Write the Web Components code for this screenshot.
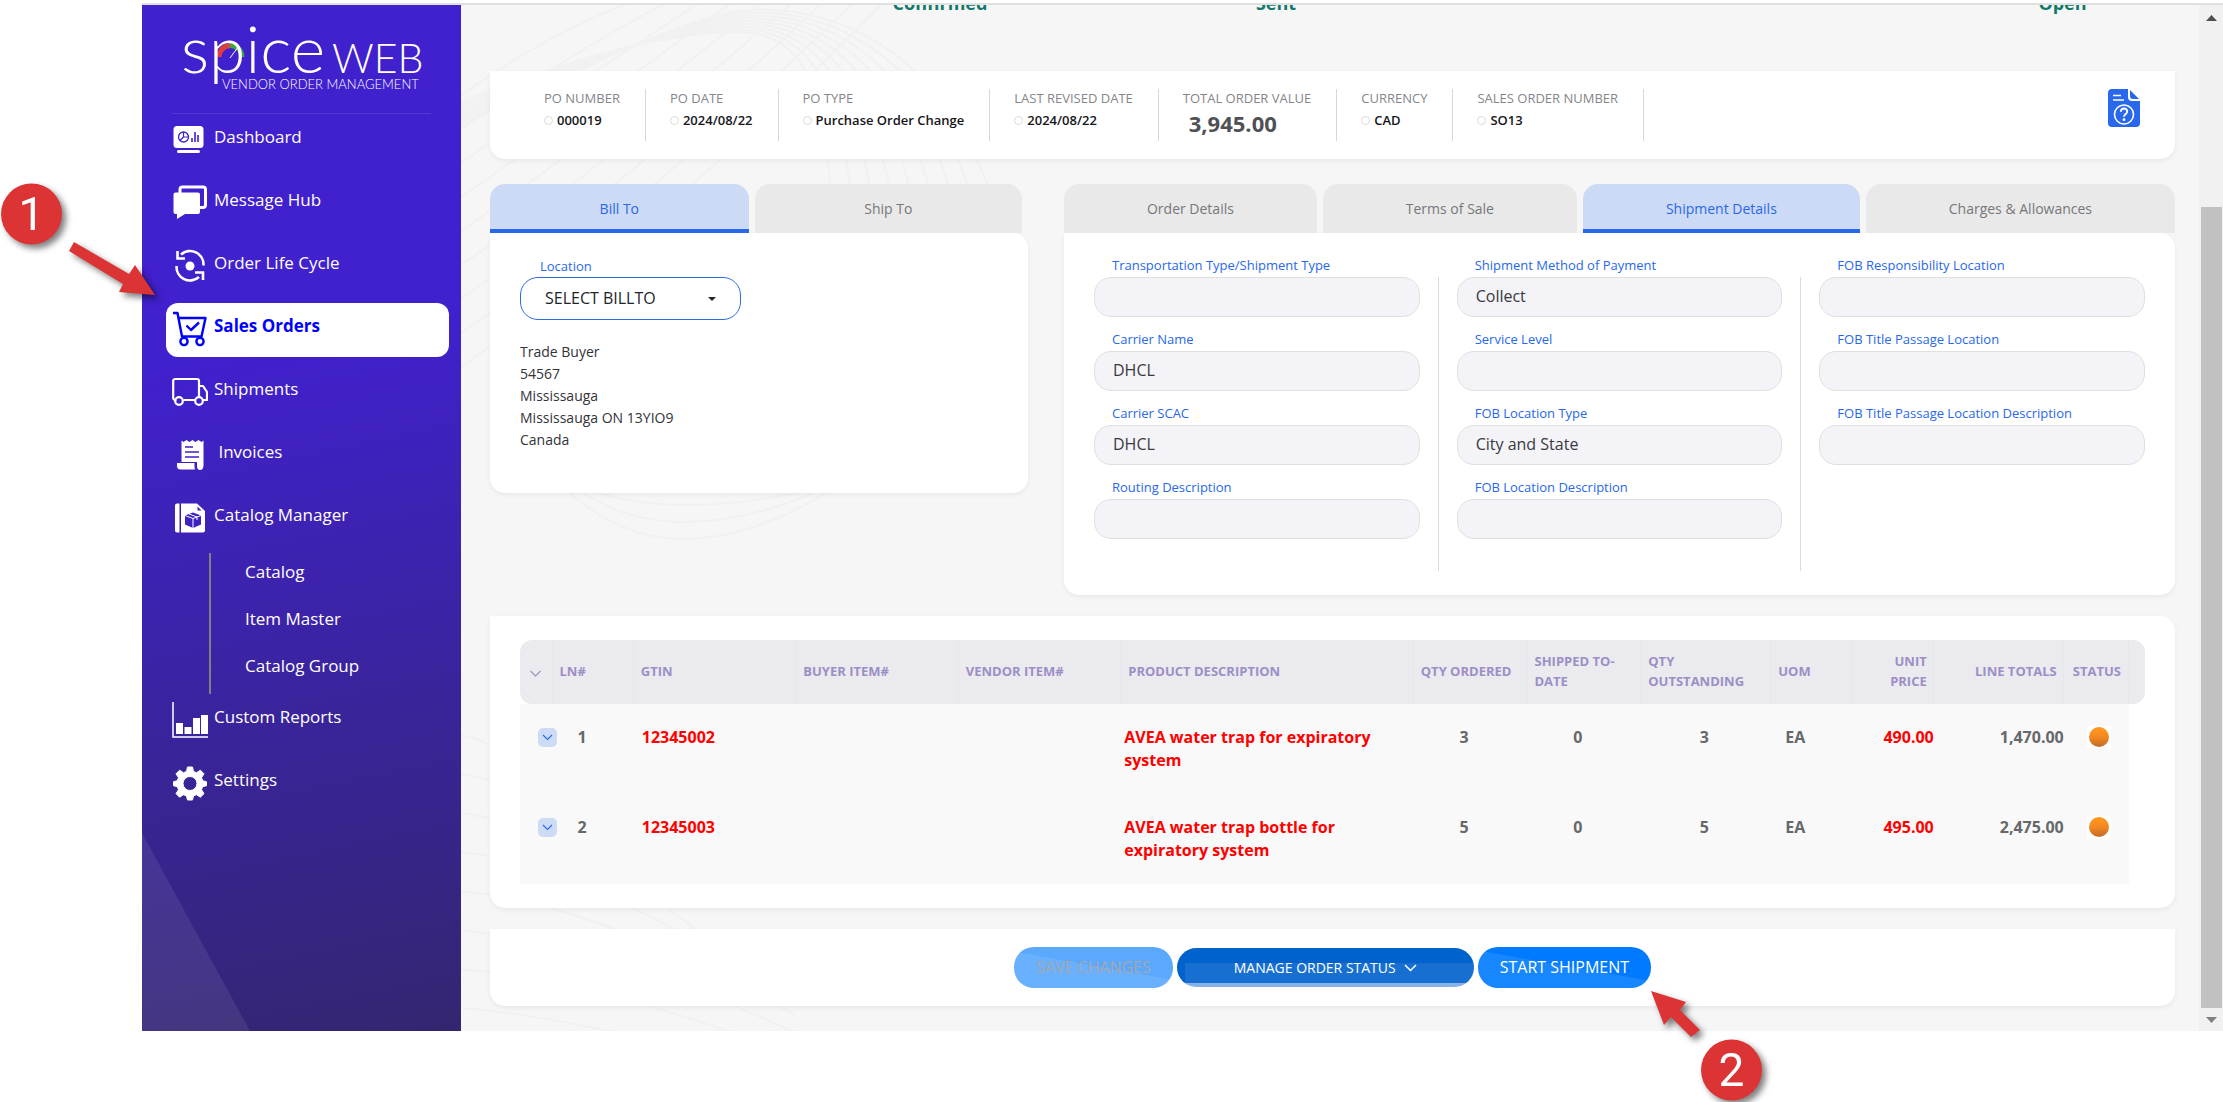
<!DOCTYPE html>
<html lang="en">
<head>
<meta charset="utf-8">
<meta name="viewport" content="width=device-width, initial-scale=1">
<title>Spice Web - Sales Order</title>
<style>
  html, body { margin: 0; background: #fff; }
  body { position: relative; min-height: 100vh; font-family: "Open Sans", "Noto Sans", sans-serif; color: #212529; overflow: hidden; }
  .app { margin-left: 142px; padding-top: 3px; }
  .rule { height: 2px; background: #e0e0e0; }
  .shell { display: grid; grid-template-columns: 319px minmax(0, 1fr) 24px; }
</style>
</head>
<body>
<div class="app">
  <div class="rule"></div>
  <div class="shell">
    <side-nav></side-nav>
    <order-page></order-page>
    <page-scrollbar></page-scrollbar>
  </div>
</div>
<step-callout number="1" style="left:0;top:180px"></step-callout>
<step-callout number="2" style="left:1640px;top:980px"></step-callout>

<script>
const define = (name, html, setup) => {
  const tpl = document.createElement('template');
  tpl.innerHTML = '<style>*{box-sizing:border-box}:host{display:block}[hidden]{display:none}</style>' + html;
  customElements.define(name, class extends HTMLElement {
    connectedCallback() {
      if (this.shadowRoot) return;
      const root = this.attachShadow({ mode: 'open' });
      root.appendChild(tpl.content.cloneNode(true));
      if (setup) setup.call(this, root);
    }
  });
};

const ICONS = {
  dashboard: '<rect x="1.500" y="4" width="30" height="22" rx="3.500" fill="#fff"/><rect x="5" y="28" width="23" height="3" rx="1.500" fill="#fff"/><circle cx="11.500" cy="15" r="5" fill="none" stroke="#4120cd" stroke-width="1.300"/><path d="M11.500 10v5h5M11.500 15l-3.500 3.500" fill="none" stroke="#4120cd" stroke-width="1.200"/><path d="M20 20v-4M23 20v-10M26 20v-7" stroke="#4120cd" stroke-width="1.600"/>',
  message: '<path d="M8 8V4.500A2.500 2.500 0 0 1 10.500 2H31a2.500 2.500 0 0 1 2.500 2.500V20a2.500 2.500 0 0 1-2.500 2.500h-3" fill="none" stroke="#fff" stroke-width="3"/><path d="M3.500 7.500H26a2 2 0 0 1 2 2V27a2 2 0 0 1-2 2H13l-8 5v-5H3.500a2 2 0 0 1-2-2V9.500a2 2 0 0 1 2-2z" fill="#fff"/>',
  cycle: '<g fill="none" stroke="#fff" stroke-width="2.600"><path d="M9 6.500A13.500 13.500 0 0 1 31.500 17.500"/><path d="M27 29A13.500 13.500 0 0 1 4.500 18"/><path d="M5.500 3v7.500H13M31 32v-7.500H23"/></g><circle cx="18" cy="18" r="4.500" fill="#fff"/>',
  cart: '<g fill="none" stroke="#00f" stroke-width="2.400" stroke-linejoin="round"><path d="M1 2h4.500L10 25.500h19.500L33.500 7H7"/><path d="M14.500 14.500l4.500 4.500 8-7.500"/><circle cx="12" cy="30.500" r="3.600"/><circle cx="28" cy="30.500" r="3.600"/></g>',
  truck: '<g fill="none" stroke="#fff" stroke-width="2.200" stroke-linejoin="round"><path d="M3 26H3.500A2 2 0 0 1 1.200 24V7A2 2 0 0 1 3.200 5H25a2 2 0 0 1 2 2V23M11.500 26H23M27 12h4l4 6v8h-4M27 12v11"/><circle cx="7" cy="27" r="3.800"/><circle cx="27" cy="27" r="3.800"/></g>',
  invoice: '<path d="M9.500 3.500l2 1.500 3-2 3 2 3-2 3 2 3-2 3 2 2-1.500V28q0 5-3.500 5-3 0-3-4v-4H9.500z" fill="#fff"/><path d="M4.500 25.500H23V30q0 2 1 3H8q-3.500 0-3.500-4z" fill="#fff" stroke="#3f21c0" stroke-width="1"/><path d="M13 10h8M13 15h14M13 20h14" stroke="#3f21c0" stroke-width="1.600"/>',
  catalog: '<path d="M5 3.500h2.500v29H5a2 2 0 0 1-2-2v-25a2 2 0 0 1 2-2z" fill="#fff"/><path d="M9 3.500h16L33 11v19.500a2 2 0 0 1-2 2H9z" fill="#fff"/><path d="M25.500 6.500v4h4z" fill="#3f21c0"/><path d="M21 12.500l8 3v9L21 28l-8-3.500v-9z" fill="#3f21c0"/><path d="M13 15.500l8 3 8-3M21 18.500V28M17 14l8 3v3" fill="none" stroke="#fff" stroke-width="1"/>',
  chart: '<path d="M1 0V35H36" fill="none" stroke="#fff" stroke-width="1.500"/><path d="M4 21h7v11H4zM12.500 25h7v7h-7zM21 16h7v16h-7zM29 13h7v19h-7z" fill="#fff"/>',
  gear: '<path fill="#fff" stroke="#fff" stroke-width="1" stroke-linejoin="round" fill-rule="evenodd" d="M15.500 2h5l1 4.500 3 1.200 3.900-2.500 3.600 3.600-2.500 3.900 1.200 3 3.800 1v4l-3.800 1-1.200 3 2.500 3.900-3.600 3.600-3.900-2.500-3 1.200-1 4.100h-5l-1-4.100-3-1.200-3.900 2.500-3.600-3.600 2.500-3.900-1.200-3-3.800-1v-4l3.800-1 1.200-3-2.500-3.900 3.600-3.600 3.900 2.500 3-1.200zM18 11.500a7 7 0 1 0 0 14 7 7 0 0 0 0-14z"/>'
};

/* One entry of the side menu. */
define('nav-item', `
<style>
  a { display: flex; align-items: center; gap: 6px; height: 54px; padding-left: 6px; border-radius: 12px; color: #fff; font-size: 17px; line-height: 24px; text-decoration: none; }
  svg { flex: none; width: 36px; height: 36px; margin-bottom: 2px; }
  span { padding-bottom: 8px; white-space: pre; }
  :host([active]) a { background: #fff; color: #00f; font-weight: 700; }
</style>
<a href="#"><svg viewBox="0 0 36 36" aria-hidden="true"></svg><span><slot></slot></span></a>`,
function (root) { root.querySelector('svg').innerHTML = ICONS[this.getAttribute('icon')]; });

define('brand-logo', `
<style>svg { display: block; width: 100%; height: 64px; overflow: visible; }</style>
<svg viewBox="0 0 240 64" preserveAspectRatio="xMinYMid" role="img" aria-label="Spice Web" fill="#fff">
  <defs><linearGradient id="g"><stop offset=".35" stop-color="#e23b3b"/><stop offset=".6" stop-color="#36a94c"/></linearGradient></defs>
  <path d="M35 32A11.500 11.500 0 0 1 58 32" fill="none" stroke="url(#g)" stroke-width="5"/>
  <path d="M46 33l8-11" stroke="#fff" stroke-width="1"/>
  <text x="-3" y="48" font-family="Lato" font-weight="300" font-size="66">spice</text>
  <text x="148" y="48" font-family="Lato" font-weight="300" font-size="41">WEB</text>
  <text x="38" y="64" font-family="Lato" font-weight="300" font-size="13">VENDOR ORDER MANAGEMENT</text>
</svg>`);

define('side-nav', `
<style>
  :host { position: relative; background: linear-gradient(168deg, #4120cd 34%, #3a249b 68%, #352570 100%); }
  nav { padding: 20px 12px 0 24px; }
  brand-logo { margin: 0 16px 0 18px; }
  hr { margin: 24px 18px 0 6px; border: 0; height: 1px; background: rgba(255,255,255,.1); }
  .list { display: grid; gap: 9px; }
  ul { list-style: none; margin: -2px 0 -9px 43px; padding: 0; border-left: 2px solid #808080; }
  li a { display: flex; align-items: center; height: 47px; padding: 0 0 10px 34px; color: #fff; font-size: 17px; line-height: 24px; text-decoration: none; }
  .wedge { position: absolute; left: 0; bottom: 0; width: 108px; height: 198px; background: rgba(255,255,255,.08); clip-path: polygon(0 0, 100% 100%, 0 100%); }
</style>
<div class="wedge"></div>
<nav>
  <brand-logo></brand-logo>
  <hr>
  <div class="list">
    <nav-item icon="dashboard">Dashboard</nav-item>
    <nav-item icon="message">Message Hub</nav-item>
    <nav-item icon="cycle">Order Life Cycle</nav-item>
    <nav-item icon="cart" active>Sales Orders</nav-item>
    <nav-item icon="truck">Shipments</nav-item>
    <nav-item icon="invoice">&nbsp;Invoices</nav-item>
    <nav-item icon="catalog">Catalog Manager</nav-item>
    <ul>
      <li><a href="#">Catalog</a></li>
      <li><a href="#">Item Master</a></li>
      <li><a href="#">Catalog Group</a></li>
    </ul>
    <nav-item icon="chart">Custom Reports</nav-item>
    <nav-item icon="gear">Settings</nav-item>
  </div>
</nav>`);

define('page-scrollbar', `
<style>
  :host { display: grid; grid-template-rows: 26px 176fr 801fr 23px; justify-items: stretch; background: #f1f1f1; }
  svg { place-self: center; width: 11px; height: 6px; }
  .thumb { margin: 0 1px 0 2px; background: #c1c1c1; }
</style>
<svg viewBox="0 0 11 6"><path d="M0 6L5.500 0 11 6z" fill="#505050"/></svg>
<div></div><div class="thumb"></div>
<svg viewBox="0 0 11 6"><path d="M0 0L5.500 6 11 0z" fill="#808080"/></svg>`);

define('surface-card', `
<style>:host { background: #fff; border-radius: 0 0 15px 15px; box-shadow: 0 2px 5px rgba(0,0,0,.06); }</style>
<slot></slot>`);

/* Label over value, with a rule on the right. */
define('summary-item', `
<style>
  :host { min-height: 52px; padding: 0 25px 0 24px; border-right: 1px solid #d8d8dc; white-space: nowrap; }
  .label { padding-bottom: 2px; font-size: 13px; line-height: 18px; color: #85858a; }
  .value { display: flex; align-items: center; gap: 4px; font-size: 13px; line-height: 22px; font-weight: 600; color: #16161a; }
  .value::before { content: ""; width: 7px; height: 7px; border: 1px solid #dadada; border-radius: 50%; }
  :host([total]) .value { padding-left: 6px; font-size: 22px; line-height: 28px; font-weight: 700; color: #505055; }
  :host([total]) .value::before { display: none; }
</style>
<div class="label"></div><div class="value"><slot></slot></div>`,
function (root) { root.querySelector('.label').textContent = this.getAttribute('label'); });

define('tab-bar', `
<style>
  :host { display: flex; gap: 6px; }
  button { flex: 1 1 auto; height: 49px; padding: 0; border: 0; border-radius: 15px 15px 0 0; background: #e9e9e9; color: #77777b; font: 400 14px/20px "Open Sans", sans-serif; }
  button[aria-selected=true] { border-bottom: 4px solid #2868ec; padding-top: 4px; background: #cddaf5; color: #2868ec; }
</style>`,
function (root) {
  this.setAttribute('role', 'tablist');
  this.getAttribute('tabs').split('|').forEach((t, i) => {
    const b = document.createElement('button');
    b.type = 'button'; b.textContent = t; b.setAttribute('role', 'tab');
    b.setAttribute('aria-selected', i === +this.getAttribute('selected'));
    root.append(b);
  });
});

define('text-field', `
<style>
  label { display: block; padding: 0 0 2px 18px; font-size: 13px; line-height: 20px; color: #2868ec; }
  input { display: block; width: 100%; height: 40px; padding: 0 18px 2px; border: 1px solid #e0e0e0; border-radius: 17px; background: #f3f3f8; color: #3a3a3e; font: 400 16px/22px "Open Sans", sans-serif; }
</style>
<label for="f"></label><input id="f" type="text" readonly>`,
function (root) {
  root.querySelector('label').textContent = this.getAttribute('label');
  root.querySelector('input').value = this.getAttribute('value') || '';
});

define('bill-to', `
<style>
  :host { padding: 22px 30px 42px; border-radius: 0 15px 15px 15px; }
  label { display: block; padding-left: 20px; font-size: 13px; line-height: 22px; color: #2868ec; }
  .select { display: grid; width: 221px; align-items: center; }
  .select > * { grid-area: 1 / 1; }
  select { appearance: none; width: 100%; height: 43px; padding: 0 24px 2px; border: 1px solid #2f6be0; border-radius: 18px; background: #fff; color: #212529; font: 400 16px/22px "Open Sans", sans-serif; }
  svg { justify-self: end; margin-right: 25px; width: 8px; height: 4px; pointer-events: none; }
  address { margin-top: 21px; font-style: normal; font-size: 14px; line-height: 22px; color: #333338; }
</style>
<label for="loc">Location</label>
<div class="select"><select id="loc"><option>SELECT BILLTO</option></select>
<svg viewBox="0 0 8 4"><path d="M0 0h8L4 4z" fill="#212529"/></svg></div>
<address>Trade Buyer<br>54567<br>Mississauga<br>Mississauga ON 13YIO9<br>Canada</address>`);

define('shipment-form', `
<style>
  :host { display: flex; gap: 18px; padding: 22px 30px 24px; }
  .col { flex: 1 1 0; display: flex; flex-direction: column; gap: 12px; padding-bottom: 32px; }
  .rule { width: 1px; margin-top: 22px; background: #dcdcdf; }
</style>
<div class="col">
  <text-field label="Transportation Type/Shipment Type"></text-field>
  <text-field label="Carrier Name" value="DHCL"></text-field>
  <text-field label="Carrier SCAC" value="DHCL"></text-field>
  <text-field label="Routing Description"></text-field>
</div>
<div class="rule"></div>
<div class="col">
  <text-field label="Shipment Method of Payment" value="Collect"></text-field>
  <text-field label="Service Level"></text-field>
  <text-field label="FOB Location Type" value="City and State"></text-field>
  <text-field label="FOB Location Description"></text-field>
</div>
<div class="rule"></div>
<div class="col">
  <text-field label="FOB Responsibility Location"></text-field>
  <text-field label="FOB Title Passage Location"></text-field>
  <text-field label="FOB Title Passage Location Description"></text-field>
</div>`);

define('line-table', `
<style>
  :host { padding: 24px 30px; }
  table { width: 100%; table-layout: fixed; border-collapse: separate; border-spacing: 0; }
  th { height: 64px; padding: 0 6px 2px 7px; background: #ebeaef; border-right: 1px solid #e7e7eb; color: #9c8fc6; font-size: 13px; line-height: 20px; font-weight: 700; text-align: left; }
  th:first-child { border-radius: 12px 0 0 12px; padding: 0; text-align: center; }
  th:last-child { border-radius: 0 12px 12px 0; border: 0; }
  th.r { text-align: right; }
  th.s { padding-left: 9px; padding-right: 0; }
  td { height: 90px; padding: 22px 8px 0; background: #f9f9f9; color: #66686b; font-size: 16px; line-height: 23px; font-weight: 700; vertical-align: top; }
  td:last-child { background: none; }
  td.t { position: relative; z-index: 1; padding: 24px 0 0 18px; }
  td.n { padding-left: 25px; }
  td.d { padding-left: 3px; padding-right: 8px; }
  td.q { text-align: center; padding: 22px 13px 0 0; }
  td.o { text-align: center; padding: 22px 4px 0 0; }
  td.u { padding-left: 14px; }
  td.r { text-align: right; padding-right: 0; }
  td.s { padding: 22px 0 0 23px; }
  .red { color: #f00; }
  button { display: grid; place-items: center; width: 19px; height: 19px; padding: 0; border: 0; border-radius: 5px; background: #cddbf5; }
  svg { width: 11px; height: 7px; }
  path { fill: none; stroke: #9a93b5; stroke-width: 1.100; }
  button path { stroke: #2868ec; }
  .dot { width: 24px; height: 22px; padding: 1px 2px; background: #fff; }
  .dot::before { content: ""; display: block; width: 20px; height: 20px; border-radius: 50%; background: linear-gradient(#ff9320 20%, #f08522 55%, #c06a28 100%); }
</style>
<table>
  <colgroup><col style="width:2%"><col style="width:5%"><col style="width:10%"><col style="width:10%"><col style="width:10%"><col style="width:18%"><col style="width:7%"><col style="width:7%"><col style="width:8%"><col style="width:5%"><col style="width:5%"><col style="width:8%"><col style="width:4%"><col style="width:1%"></colgroup>
  <thead><tr>
    <th><svg viewBox="0 0 11 7"><path d="M.500 1L5.500 6 10.500 1"/></svg></th><th>LN#</th><th>GTIN</th><th>BUYER ITEM#</th><th>VENDOR ITEM#</th><th>PRODUCT DESCRIPTION</th><th>QTY ORDERED</th><th>SHIPPED TO-DATE</th><th>QTY OUTSTANDING</th><th>UOM</th><th class="r">UNIT PRICE</th><th class="r">LINE TOTALS</th><th class="s">STATUS</th><th></th>
  </tr></thead>
  <tbody></tbody>
</table>`,
function (root) {
  const rows = [
    ['1', '12345002', 'AVEA water trap for expiratory system', '3', '0', '3', 'EA', '490.00', '1,470.00'],
    ['2', '12345003', 'AVEA water trap bottle for expiratory system', '5', '0', '5', 'EA', '495.00', '2,475.00']
  ];
  root.querySelector('tbody').innerHTML = rows.map(r => `<tr>
    <td class="t"><button type="button" aria-label="Expand line ${r[0]}"><svg viewBox="0 0 11 7"><path d="M1 1L5.500 5.500 10 1"/></svg></button></td>
    <td class="n">${r[0]}</td><td class="red">${r[1]}</td><td></td><td></td><td class="d red">${r[2]}</td>
    <td class="q">${r[3]}</td><td class="q">${r[4]}</td><td class="o">${r[5]}</td><td class="u">${r[6]}</td>
    <td class="r red">${r[7]}</td><td class="r">${r[8]}</td><td class="s"><div class="dot"></div></td><td></td></tr>`).join('');
});

define('action-bar', `
<style>
  :host { display: flex; justify-content: center; align-items: center; gap: 4px; padding: 18px; }
  button { display: flex; align-items: center; justify-content: center; gap: 8px; height: 41px; padding: 0 22px 1px; border: 0; border-radius: 20px; color: #fff; background: #007bff; font: 400 16px/22px "Open Sans", sans-serif; white-space: nowrap; }
  .gloss { background: linear-gradient(10deg, rgba(255,255,255,.09) 52%, transparent 53%), #007bff; }
  .save { color: #a3a7ad; background: linear-gradient(10deg, rgba(255,255,255,.09) 52%, transparent 53%), #5aa9ff; }
  .manage { width: 297px; height: 39px; padding-bottom: 0; font-size: 14px; background: linear-gradient(transparent 35px, #85b3e8 35px), linear-gradient(transparent 15px, rgba(255,255,255,.09) 15px) 8px 0 no-repeat, #0062cc; }
  svg { width: 13px; height: 8px; }
</style>
<button type="button" class="save" disabled>SAVE CHANGES</button>
<button type="button" class="manage">MANAGE ORDER STATUS <svg viewBox="0 0 13 8"><path d="M1 1l5.500 5.500L12 1" fill="none" stroke="#fff" stroke-width="1.500"/></svg></button>
<button type="button" class="gloss">START SHIPMENT</button>`);

/* Faint contour lines behind the cards. */
define('contour-lines', `
<style>svg { display: block; width: 100%; height: 100%; }</style>
<svg viewBox="0 0 1738 1026" preserveAspectRatio="xMidYMid slice" fill="none" stroke="#f1f1f1" stroke-width="2"></svg>`,
function (root) {
  let d = '';
  for (let i = 0; i < 9; i++) {
    d += `M0 ${90 + i * 34}Q${100 + i * 12} ${20 + i * 26} ${190 + i * 30} -10`;
    d += `M0 ${96 + i * 3}C110 ${56 + i * 2} 170 36 250 ${28 - i * 2}S${360 + i * 14} ${50 - i * 4} ${370 + i * 20} 190`;
    d += `M0 ${730 + i * 39}Q${60 + i * 20} ${740 + i * 40} ${150 + i * 46} ${850 + i * 40}`;
  }
  for (let i = 0; i < 3; i++) d += `M${130 - i * 12} 485Q${210} ${515 + i * 34} ${350 + i * 10} 485`;
  root.querySelector('svg').innerHTML = `<path d="${d}"/>`;
});

define('order-page', `
<style>
  :host { display: grid; overflow: hidden; background: #f6f6f6; }
  contour-lines, main { grid-area: 1 / 1; min-width: 0; }
  contour-lines { contain: size; }
  main { position: relative; display: flex; flex-direction: column; gap: 21px; padding: 0 24px 25px 29px; }
  .steps { display: grid; grid-template-columns: 282fr 336fr 336fr 506fr 225fr; height: 59px; margin: -14px 0 0; font-size: 18px; line-height: 24px; font-weight: 700; color: #107a6a; text-align: center; }
  .steps span:nth-child(1) { grid-column: 2; }
  .steps span:nth-child(3) { grid-column: 5; }
  .top { margin-bottom: 4px; }
  .summary { display: flex; padding: 18px 35px 18px 30px; }
  .help { margin-left: auto; width: 32px; height: 38px; padding: 0; border: 0; background: none; }
  .help svg { display: block; width: 32px; height: 38px; }
  .panels { display: grid; grid-template-columns: 538fr 1111fr; gap: 36px; align-items: start; }
  .left tab-bar { margin-right: 6px; }
  .panels surface-card { border-radius: 0 15px 15px 15px; }
  .lines { border-radius: 0 15px 15px 15px; }
</style>
<contour-lines></contour-lines>
<main>
  <div class="steps"><span>Confirmed</span><span>Sent</span><span>Open</span></div>
  <surface-card class="top">
    <div class="summary">
      <summary-item label="PO NUMBER">000019</summary-item>
      <summary-item label="PO DATE">2024/08/22</summary-item>
      <summary-item label="PO TYPE">Purchase Order Change</summary-item>
      <summary-item label="LAST REVISED DATE">2024/08/22</summary-item>
      <summary-item label="TOTAL ORDER VALUE" total>3,945.00</summary-item>
      <summary-item label="CURRENCY">CAD</summary-item>
      <summary-item label="SALES ORDER NUMBER">SO13</summary-item>
      <button type="button" class="help" aria-label="Help"><svg viewBox="0 0 32 38"><path d="M4 0h16v8q0 4 4 4h8v22q0 4-4 4H4q-4 0-4-4V4q0-4 4-4z" fill="#2868ec"/><path d="M22 1l9 9h-6q-3 0-3-3z" fill="#2868ec"/><g fill="none" stroke="#fff" stroke-width="1.600"><path d="M5 6.500h8M5 11h11"/><circle cx="16" cy="25.500" r="9.500"/><path d="M12.800 22.800q.2-3.300 3.200-3.300t3.200 3q0 1.500-1.700 2.700-1.500 1.100-1.500 2.500" stroke-width="1.900"/></g><circle cx="16" cy="30.700" r="1.400" fill="#fff"/></svg></button>
    </div>
  </surface-card>
  <div class="panels">
    <div class="left"><tab-bar tabs="Bill To|Ship To" selected="0"></tab-bar><surface-card><bill-to></bill-to></surface-card></div>
    <div><tab-bar tabs="Order Details|Terms of Sale|Shipment Details|Charges &amp; Allowances" selected="2"></tab-bar><surface-card><shipment-form></shipment-form></surface-card></div>
  </div>
  <surface-card class="lines"><line-table></line-table></surface-card>
  <surface-card><action-bar></action-bar></surface-card>
</main>`);

/* Numbered marker with its arrow, laid over the page. */
define('step-callout', `
<style>
  :host { position: absolute; pointer-events: none; }
  svg { display: block; overflow: visible; filter: drop-shadow(4px 4px 3px rgba(0,0,0,.5)); }
</style>
<svg width="170" height="122" fill="#dc3434"><circle r="30.500"/><path/><text fill="#fff" font-family="Roboto, sans-serif" font-size="46" text-anchor="middle"></text></svg>`,
function (root) {
  const n = this.getAttribute('number');
  const [cx, cy, d] = n === '1'
    ? [31.5, 34, 'M74 62L129 94 135 85 155 115 119 112 123 104 69 71z']
    : [91.5, 90, 'M11 11L46 22 40 30 60 50 51 57 31 37 24 45z'];
  const c = root.querySelector('circle'), t = root.querySelector('text');
  c.setAttribute('cx', cx); c.setAttribute('cy', cy);
  root.querySelector('path').setAttribute('d', d);
  t.setAttribute('x', cx); t.setAttribute('y', cy + 16); t.textContent = n;
});
</script>
</body>
</html>
